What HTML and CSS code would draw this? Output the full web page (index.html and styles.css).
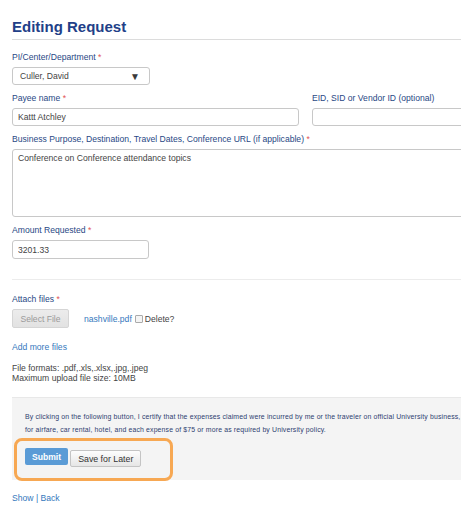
FILE: index.html
```html
<!DOCTYPE html>
<html lang="en">
<head>
    <meta charset="UTF-8">
    <meta name="viewport" content="width=device-width, initial-scale=1.0">
    <title>Editing Request</title>
    <link rel="stylesheet" href="styles.css">
</head>
<body>
    <div class="page">
        <h1 class="title">Editing Request</h1>

        <form class="form">
            <div class="field">
                <label>PI/Center/Department <span class="req">*</span></label>
                <div class="select">Culler, David <span class="caret">▼</span></div>
            </div>

            <div class="row">
                <div class="field col">
                    <label>Payee name <span class="req">*</span></label>
                    <input class="input" type="text" value="Kattt Atchley">
                </div>
                <div class="field col">
                    <label>EID, SID or Vendor ID (optional)</label>
                    <input class="input" type="text" value="">
                </div>
            </div>

            <div class="field">
                <label>Business Purpose, Destination, Travel Dates, Conference URL (if applicable) <span class="req">*</span></label>
                <textarea class="textarea">Conference on Conference attendance topics</textarea>
            </div>

            <div class="field">
                <label>Amount Requested <span class="req">*</span></label>
                <input class="input short" type="text" value="3201.33">
            </div>

            <div class="divider"></div>

            <div class="field">
                <label>Attach files <span class="req">*</span></label>
                <div class="files">
                    <button type="button" class="btn-file">Select File</button>
                    <a href="#" class="link file-name">nashville.pdf</a>
                    <span class="check"></span>
                    <span class="delete">Delete?</span>
                </div>
            </div>

            <a href="#" class="link add-more">Add more files</a>

            <div class="file-info">
                File formats: .pdf,.xls,.xlsx,.jpg,.jpeg<br>
                Maximum upload file size: 10MB
            </div>

            <div class="certify">
                <p class="certify-text">By clicking on the following button, I certify that the expenses claimed were incurred by me or the traveler on official University business, and that I have attached receipts<br>for airfare, car rental, hotel, and each expense of $75 or more as required by University policy.</p>
                <div class="actions">
                    <button type="button" class="btn-submit">Submit</button>
                    <button type="button" class="btn-later">Save for Later</button>
                </div>
                <div class="highlight"></div>
            </div>
        </form>

        <div class="footer-links">
            <a href="#" class="link">Show</a> | <a href="#" class="link">Back</a>
        </div>
    </div>
</body>
</html>
```

FILE: styles.css
```css
html, body {
    margin: 0;
    padding: 0;
    background: #fff;
    overflow: hidden;
}
body {
    font-family: "Liberation Sans", Arial, sans-serif;
    font-size: 8.6px;
    color: #444;
}
.page {
    width: 600px;
    padding: 18px 0 0 12px;
}
.title {
    margin: 0;
    font-size: 15px;
    line-height: 18px;
    font-weight: bold;
    color: #223f88;
    padding-bottom: 3px;
    border-bottom: 1px solid #dcdcdc;
    margin-bottom: 12px;
}
.field {
    margin-bottom: 8px;
}
.field label {
    display: block;
    line-height: 11px;
    margin-bottom: 4px;
    color: #284884;
}
.req {
    color: #e25454;
}
.row {
    display: flex;
    gap: 13px;
}
.col {
    flex: 0 0 287px;
}
.input, .textarea, .select {
    box-sizing: border-box;
    display: block;
    width: 100%;
    height: 18px;
    margin: 0;
    padding: 0 5px;
    border: 1px solid #c8c8c8;
    border-radius: 3px;
    font-family: inherit;
    font-size: 8.6px;
    color: #444;
    background: #fff;
    outline: none;
}
.select {
    width: 138px;
    display: flex;
    align-items: center;
    justify-content: space-between;
    padding: 0 9px 0 7px;
}
.caret {
    font-size: 10px;
    color: #3a3a3a;
}
.input.short {
    width: 137px;
    height: 19px;
}
.textarea {
    height: 68px;
    padding: 3px 5px;
    line-height: 11px;
    resize: none;
}
.divider {
    border-top: 1px solid #ececec;
    margin: 20px 0 14px;
}
.files {
    display: flex;
    align-items: center;
}
.btn-file {
    width: 57px;
    height: 19px;
    padding: 0;
    border: 1px solid #d5d5d5;
    border-radius: 2px;
    background: linear-gradient(#ececec, #e2e2e2);
    color: #9a9a9a;
    font-family: inherit;
    font-size: 8.6px;
}
.link {
    color: #3578bd;
    text-decoration: none;
}
.file-name {
    margin-left: 15px;
}
.check {
    display: inline-block;
    width: 6px;
    height: 6px;
    border: 1px solid #aaa;
    border-radius: 1px;
    background: #f4f4f4;
    margin: 0 2px 0 3px;
}
.delete {
    color: #444;
}
.add-more {
    display: block;
    line-height: 11px;
    margin-top: 14px;
}
.file-info {
    line-height: 10px;
    margin-top: 10px;
    color: #444;
}
.certify {
    position: relative;
    margin-top: 14px;
    background: #f4f4f4;
    border-top: 1px solid #e8e8e8;
    padding: 12px 13px 13px;
}
.certify-text {
    margin: 0 0 12px;
    font-size: 6.9px;
    line-height: 13px;
    letter-spacing: 0.15px;
    white-space: nowrap;
    color: #2e3e70;
}
.actions {
    display: flex;
    align-items: flex-start;
    gap: 2px;
}
.btn-submit {
    height: 17px;
    padding: 0 7px;
    border: none;
    border-radius: 2px;
    background: #5a9bd6;
    color: #fff;
    font-family: inherit;
    font-size: 8.6px;
    font-weight: bold;
}
.btn-later {
    margin-top: 2px;
    height: 17px;
    padding: 0 7px;
    border: 1px solid #c4c4c4;
    border-radius: 2px;
    background: linear-gradient(#fdfdfd, #e6e6e6);
    color: #333;
    font-family: inherit;
    font-size: 8.8px;
}
.highlight {
    position: absolute;
    left: 2px;
    top: 40px;
    width: 153px;
    height: 37px;
    border: 3px solid #f7a853;
    border-radius: 8px;
}
.footer-links {
    margin-top: 13px;
    line-height: 11px;
    color: #3578bd;
}
```
